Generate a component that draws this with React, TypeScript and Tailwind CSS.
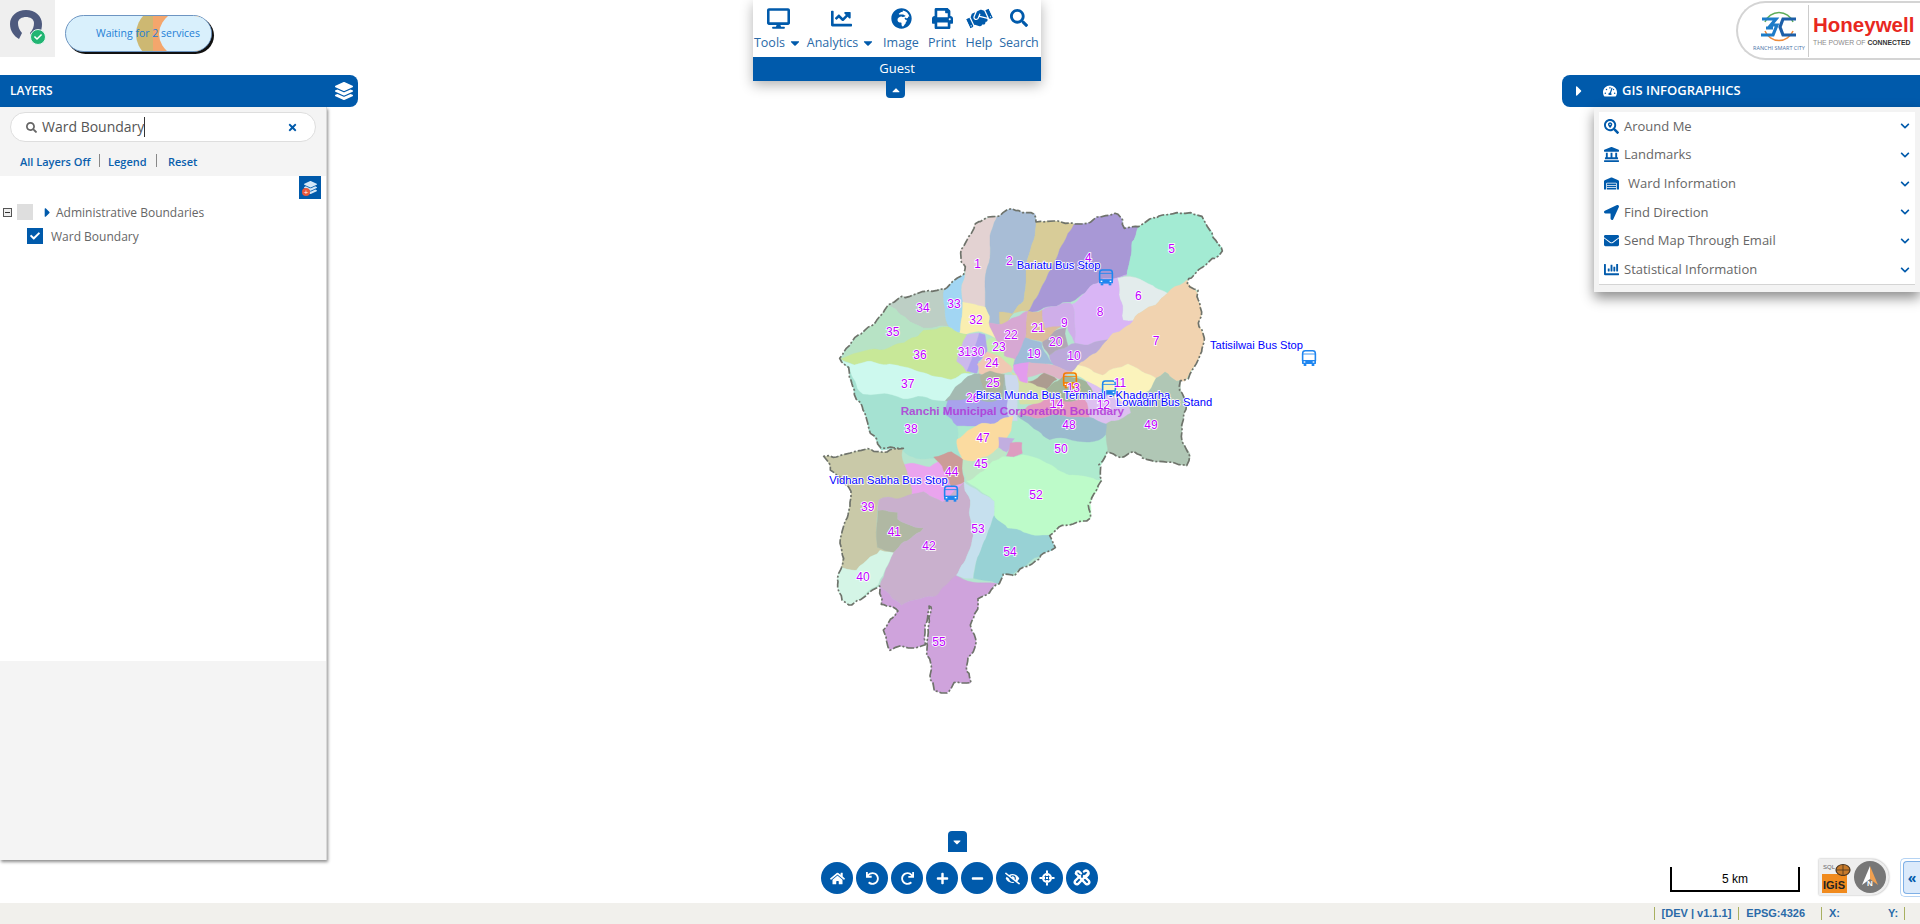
import { useMemo } from 'react'
import {
  FaCaretDown,
  FaCaretRight,
  FaCaretUp,
  FaChartBar,
  FaChartLine,
  FaCheck,
  FaChevronDown,
  FaDesktop,
  FaEnvelope,
  FaEyeSlash,
  FaGlobeAfrica,
  FaHandshake,
  FaHome,
  FaLandmark,
  FaLayerGroup,
  FaLocationArrow,
  FaMinus,
  FaPlus,
  FaPrint,
  FaRedo,
  FaSearch,
  FaSearchLocation,
  FaTachometerAlt,
  FaTimes,
  FaUndo,
  FaWarehouse,
} from 'react-icons/fa'

const font = { fontFamily: '"Open Sans", "Noto Sans", sans-serif' }

const MENU = [
  { label: 'Tools', icon: FaDesktop, w: 'w-[50px]', size: 'text-[23px]', caret: true },
  { label: 'Analytics', icon: FaChartLine, w: 'w-[76px]', size: 'text-[21px]', caret: true },
  { label: 'Image', icon: FaGlobeAfrica, w: 'w-[44px]', size: 'text-[21px]' },
  { label: 'Print', icon: FaPrint, w: 'w-[38px]', size: 'text-[21px]' },
  { label: 'Help', icon: FaHandshake, w: 'w-[36px]', size: 'text-[25px] -rotate-[25deg]' },
  { label: 'Search', icon: FaSearch, w: 'w-[44px]', size: 'text-[18px]' },
]

const GIS_ROWS = [
  { label: 'Around Me', icon: FaSearchLocation, indent: false },
  { label: 'Landmarks', icon: FaLandmark, indent: false },
  { label: 'Ward Information', icon: FaWarehouse, indent: true },
  { label: 'Find Direction', icon: FaLocationArrow, indent: false },
  { label: 'Send Map Through Email', icon: FaEnvelope, indent: false },
  { label: 'Statistical Information', icon: FaChartBar, indent: false },
]

function TargetIcon() {
  return (
    <svg width="16" height="16" viewBox="0 0 16 16">
      <circle cx="8" cy="8" r="5" fill="#fff" />
      <path d="M8 0.5V3M8 13V15.5M0.5 8H3M13 8H15.5" stroke="#fff" strokeWidth="2" />
      <path d="M6.5 5.5V10.5M9.5 5.5V10.5M5.5 6.5H10.5M5.5 9.5H10.5" stroke="#005aab" strokeWidth="1" />
    </svg>
  )
}

function KnotIcon() {
  return (
    <svg width="18" height="18" viewBox="0 0 18 18" fill="none" stroke="#fff" strokeWidth="2.4" strokeLinecap="round">
      <path d="M3 4.5L13 15A2.2 2.2 0 0 0 16 12L11 7" />
      <path d="M15 4.5L5 15A2.2 2.2 0 0 1 2 12L7 7" />
      <path d="M11 2.5A2.6 2.6 0 0 1 15 6L12 9" />
      <path d="M3 4.5A2 2 0 0 1 6 2.5L8 4.5" />
    </svg>
  )
}

const TOOLS = [
  <FaHome key="home" className="text-[15px]" />,
  <FaUndo key="undo" />,
  <FaRedo key="redo" />,
  <FaPlus key="plus" />,
  <FaMinus key="minus" />,
  <FaEyeSlash key="eye" className="text-[15px]" />,
  <TargetIcon key="target" />,
  <KnotIcon key="knot" />,
]

// ward shapes, in 3x units of the map canvas
const WARDS: { fill: string; pts: string }[] = [
  { fill: '#a5e2d2', pts: '100,510 170,690 210,775 275,780 300,800 445,810 445,745 500,710 420,620 160,600' },
  { fill: '#aeeace', pts: '440,700 610,680 650,695 720,745 840,755 885,740 890,790 870,830 870,870 770,850 720,825 640,795 590,800 480,875 460,800' },
  { fill: '#e3d2d2', pts: '555,75 490,105 455,180 460,255 458,340 525,350 530,230 548,130' },
  { fill: '#a8bdd6', pts: '555,75 600,58 640,68 680,70 680,95 650,240 640,330 600,395 540,400 525,350 530,230 548,130' },
  { fill: '#d8cc98', pts: '680,92 740,95 790,105 745,200 690,300 660,362 610,372 568,365 570,403 600,395 640,330 650,240' },
  { fill: '#a898d6', pts: '787,105 860,85 925,70 950,110 990,110 965,155 955,260 880,265 830,310 740,350 660,362 690,300 745,200' },
  { fill: '#a3ebd3', pts: '990,110 1050,75 1100,68 1170,80 1210,125 1235,180 1175,235 1130,265 1078,310 1000,270 955,260 965,155' },
  { fill: '#e3ecec', pts: '925,262 1000,270 1078,310 970,390 945,385 925,310' },
  { fill: '#f1d3b0', pts: '1130,270 1165,305 1170,400 1185,440 1170,500 1130,570 1100,575 1060,550 1037,565 960,525 880,550 800,530 890,450 970,390 1078,310' },
  { fill: '#d9b5f5', pts: '955,260 925,262 925,310 945,385 970,390 890,450 800,465 785,340 830,310 880,265' },
  { fill: '#cfaee9', pts: '785,335 800,465 770,410 700,415 700,360 740,350' },
  { fill: '#bba9d9', pts: '890,450 800,530 780,545 730,525 720,490 775,470 800,465' },
  { fill: '#b0a7b6', pts: '720,430 765,412 775,470 720,490 695,455' },
  { fill: '#dcbd9e', pts: '660,362 700,360 700,412 750,410 695,455 640,445' },
  { fill: '#d7a8d3', pts: '540,400 600,395 660,362 640,445 612,520 580,495 555,440' },
  { fill: '#a0bcd9', pts: '640,445 695,458 730,522 612,522 625,480' },
  { fill: '#c4ecb0', pts: '555,440 580,495 612,505 612,530 580,505 530,490 525,460' },
  { fill: '#a2d6f3', pts: '400,295 458,255 458,340 448,425 410,412' },
  { fill: '#bdcfc5', pts: '232,352 270,318 330,310 400,295 410,412 340,412' },
  { fill: '#f9eeb0', pts: '458,340 525,350 540,400 555,440 530,432 448,425' },
  { fill: '#b7e3c5', pts: '232,352 340,412 410,415 475,430 340,425 280,460 100,500 180,405' },
  { fill: '#c8e898', pts: '95,500 280,460 340,420 410,415 475,430 445,510 480,545 420,570 240,520 130,520' },
  { fill: '#ccb9ec', pts: '475,430 510,435 495,480 470,545 440,515' },
  { fill: '#afa3ed', pts: '510,435 530,440 525,490 500,510 500,545 470,540' },
  { fill: '#f0c9b3', pts: '525,490 580,505 612,530 610,545 540,560 510,548 497,520' },
  { fill: '#cdf9ee', pts: '95,505 130,520 240,520 420,570 490,545 410,630 160,610' },
  { fill: '#a4bab2', pts: '410,630 490,545 510,548 540,560 585,555 590,640 440,640' },
  { fill: '#adb49e', pts: '515,555 540,545 585,555 570,630 540,620 520,590' },
  { fill: '#a8a3ec', pts: '400,670 420,630 600,630 610,680 500,710 440,705' },
  { fill: '#d6e0a8', pts: '610,545 650,570 720,605 720,640 630,640' },
  { fill: '#e39cee', pts: '615,520 660,520 650,578 625,570' },
  { fill: '#deb5c7', pts: '660,520 730,525 780,545 755,562 700,555 652,558' },
  { fill: '#ac9c90', pts: '652,575 700,555 740,565 710,600 680,590' },
  { fill: '#a2b59a', pts: '710,600 760,555 840,580 850,625 720,635' },
  { fill: '#fbf3bc', pts: '780,545 800,530 880,550 960,525 1037,565 1020,600 960,650 880,595 835,575' },
  { fill: '#ddc0f0', pts: '835,575 880,595 960,650 965,670 890,705 840,680 820,630 850,625' },
  { fill: '#e39ac0', pts: '625,680 660,645 720,630 820,630 840,680' },
  { fill: '#ccd9ee', pts: '585,555 620,555 625,695 605,695 590,640' },
  { fill: '#b0c7b5', pts: '1037,565 1060,550 1100,575 1115,575 1125,660 1115,740 1137,805 1130,822 1020,815 975,782 935,805 890,790 885,705 965,670 960,650 1020,600' },
  { fill: '#9abbce', pts: '625,680 840,680 890,705 885,740 840,755 720,745 650,700' },
  { fill: '#fbdba0', pts: '445,745 500,710 610,680 600,720 560,775 530,810 450,812' },
  { fill: '#c1aee0', pts: '565,740 610,745 590,782 560,775' },
  { fill: '#dd9cc0', pts: '600,758 638,760 640,792 590,798' },
  { fill: '#bfe6c5', pts: '450,810 530,805 560,775 590,782 585,800 475,878 460,840' },
  { fill: '#eaa4ee', pts: '280,825 360,825 385,815 430,890 465,880 470,940 400,935 340,908 305,920' },
  { fill: '#cc9c98', pts: '375,800 425,790 452,810 465,880 430,890 385,820' },
  { fill: '#c9c9a8', pts: '45,805 130,785 275,778 305,920 205,930 198,1070 250,1090 205,1078 145,1142 90,1125 100,1010 130,900 60,840' },
  { fill: '#b0b8a3', pts: '205,965 265,965 265,990 335,1012 250,1090 198,1070' },
  { fill: '#c9b0cd', pts: '205,930 340,908 400,935 465,880 492,1040 442,1160 440,1210 370,1220 280,1240 205,1190 250,1090 335,1012 265,990 265,965 205,965' },
  { fill: '#d4f5e6', pts: '90,1125 145,1142 205,1078 250,1090 200,1185 110,1248 85,1210' },
  { fill: '#c6e0ee', pts: '465,880 555,935 555,970 515,1070 490,1162 442,1160 492,1040' },
  { fill: '#98d2d5', pts: '555,972 590,1015 640,1030 725,1035 735,1070 690,1095 640,1130 580,1155 565,1185 492,1162 515,1070' },
  { fill: '#bdfbc9', pts: '475,875 580,800 640,795 720,825 770,850 860,870 878,865 840,940 845,985 770,1005 725,1035 640,1030 590,1015 555,972 555,935' },
  { fill: '#cfa3dc', pts: '205,1190 280,1240 370,1220 442,1162 560,1185 500,1225 505,1260 485,1310 495,1375 475,1400 478,1475 430,1485 405,1510 375,1500 352,1390 360,1250 352,1250 345,1365 240,1380 215,1320 270,1260 215,1245' },
]

const OUTLINE: [number, number][] = [
  [490, 105], [530, 85], [555, 75], [600, 58], [640, 68], [680, 70], [680, 92], [740, 95], [790, 105], [860, 85], [925, 70], [950, 110], [990, 110], [1050, 75], [1100, 68], [1170, 80], [1210, 125], [1235, 180], [1175, 235], [1135, 265], [1135, 280], [1165, 300], [1170, 400], [1185, 440], [1170, 500], [1140, 560], [1112, 575], [1125, 660], [1115, 740], [1130, 790], [1137, 810], [1130, 822], [1020, 815], [975, 782], [935, 805], [890, 790], [870, 820], [878, 865], [855, 905], [835, 950], [845, 985], [770, 1005], [725, 1035], [735, 1070], [690, 1095], [685, 1110], [660, 1125], [640, 1130], [610, 1150], [580, 1155], [565, 1185], [500, 1225], [505, 1260], [485, 1310], [495, 1375], [475, 1400], [478, 1475], [430, 1485], [405, 1510], [375, 1500], [352, 1390], [360, 1250], [352, 1250], [345, 1365], [240, 1380], [215, 1320], [270, 1260], [215, 1245], [205, 1190], [110, 1248], [85, 1210], [100, 1010], [130, 900], [60, 840], [45, 805], [130, 785], [275, 778], [210, 770], [170, 690], [100, 510], [92, 500], [180, 405], [232, 352], [270, 318], [330, 310], [400, 295], [455, 255], [460, 235], [455, 180],
]

const WARD_LABELS: [string, number, number][] = [
  ['1', 503, 222], ['2', 598, 212], ['4', 835, 205], ['5', 1085, 178], ['6', 985, 317], ['7', 1038, 452], ['8', 870, 365], ['9', 763, 398], ['10', 792, 497], ['11', 930, 578], ['12', 880, 645], ['13', 790, 595], ['14', 740, 643], ['19', 672, 491], ['20', 737, 455], ['21', 684, 413], ['22', 603, 434], ['23', 567, 470], ['24', 546, 518], ['25', 549, 578], ['26', 488, 625], ['31', 463, 485], ['30', 503, 485], ['32', 498, 389], ['33', 432, 341], ['34', 339, 353], ['35', 248, 425], ['36', 330, 496], ['37', 293, 583], ['38', 303, 716], ['47', 519, 743], ['48', 777, 704], ['49', 1023, 704], ['50', 753, 778], ['44', 425, 845], ['45', 513, 823], ['52', 678, 914], ['39', 173, 950], ['41', 253, 1027], ['42', 357, 1067], ['53', 504, 1016], ['54', 600, 1085], ['40', 159, 1160], ['55', 387, 1357],
]

const STOP_LABELS: [string, number, number][] = [
  ['Bariatu Bus Stop', 620, 226],
  ['Tatisilwai Bus Stop', 1200, 465],
  ['Birsa Munda Bus Terminal - Khadgarha', 497, 615],
  ['Lowadin Bus Stand', 918, 637],
  ['Vidhan Sabha Bus Stop', 58, 870],
]

// same offset for the same spot, so neighbouring wards keep a shared edge
function warp(x: number, y: number): [number, number] {
  const a = Math.sin(y * 0.045 + x * 0.02) * 4 + Math.sin(x * 0.13 + y * 0.07) * 2.5
  const b = Math.sin(x * 0.05 - y * 0.02) * 4 + Math.sin(y * 0.12 - x * 0.08) * 2.5
  return [x + a, y + b]
}

function trace(points: [number, number][], jitter = 0) {
  let out = ''
  points.forEach(([x, y], i) => {
    const [nx, ny] = points[(i + 1) % points.length]
    const steps = Math.max(1, Math.round(Math.hypot(nx - x, ny - y) / 12))
    for (let s = 0; s < steps; s++) {
      const t = s / steps
      const [px, py] = warp(x + (nx - x) * t, y + (ny - y) * t)
      const j = Math.sin(i * 7.3 + s * 2.1) * jitter
      out += `${Math.round(px + j)},${Math.round(py - j)} `
    }
  })
  return out
}

function parsePts(pts: string) {
  return pts.split(' ').map((p) => p.split(',').map(Number) as [number, number])
}

function Bus({ x, y, color }: { x: number; y: number; color: string }) {
  return (
    <g transform={`translate(${x - 21} ${y - 24})`}>
      <rect x="2" y="2" width="38" height="38" rx="8" fill="none" stroke={color} strokeWidth="4.5" />
      <rect x="1" y="12" width="40" height="20" fill="none" stroke={color} strokeWidth="2.5" />
      <rect x="0" y="30" width="42" height="12" rx="2" fill={color} />
      <rect x="5" y="42" width="8" height="6" fill={color} />
      <rect x="29" y="42" width="8" height="6" fill={color} />
      <rect x="5" y="34" width="5" height="4" fill="#fff" />
      <rect x="32" y="34" width="5" height="4" fill="#fff" />
    </g>
  )
}

function WardMap() {
  const wards = useMemo(() => WARDS.map((w) => ({ fill: w.fill, pts: trace(parsePts(w.pts)) })), [])
  const outline = useMemo(() => trace(OUTLINE, 1.5), [])
  return (
    <svg className="absolute left-[810px] top-[190px] w-[530px] h-[520px]" viewBox="0 0 1590 1560">
      <polygon points={outline} fill="#b5e5d0" />
      {wards.map((w, i) => (
        <polygon key={i} points={w.pts} fill={w.fill} stroke={w.fill} strokeWidth="1" strokeLinejoin="round" />
      ))}
      <polygon points={outline} fill="none" stroke="#6f736b" strokeWidth="5" strokeDasharray="24 6 6 6" strokeLinejoin="round" />
      <Bus x={888} y={262} color="#1f86f0" />
      <Bus x={780} y={571} color="#f57c00" />
      <Bus x={897} y={595} color="#1f86f0" />
      <Bus x={423} y={911} color="#1f86f0" />
      <Bus x={1497} y={504} color="#1f86f0" />
      <g fontFamily='"Liberation Sans", sans-serif'>
        {WARD_LABELS.map(([t, x, y]) => (
          <text key={t} x={x} y={y} fontSize="36" textAnchor="middle" dominantBaseline="central" fill="#c000ff" stroke="#fff" strokeWidth="5" className="[paint-order:stroke]">
            {t}
          </text>
        ))}
        {STOP_LABELS.map(([t, x, y]) => (
          <text key={t} x={x} y={y} fontSize="33.5" dominantBaseline="central" fill="#0000ff" stroke="#fff" strokeWidth="5" className="[paint-order:stroke]">
            {t}
          </text>
        ))}
        <text x="272" y="660" fontSize="35" dominantBaseline="central" fontWeight="700" fill="#b030d8" opacity="0.8">
          Ranchi Municipal Corporation Boundary
        </text>
      </g>
    </svg>
  )
}

function StatusPill() {
  return (
    <div className="relative ml-[10px] mt-[15px] w-[147px] h-[37px] rounded-full overflow-hidden bg-[#d9f0fc] border border-[#6d95c2] shadow-[2px_2px_0_#111] flex items-center justify-end pr-[11px]">
      <div className="absolute left-[70px] top-[-12px] w-[70px] h-[60px] rounded-[50%] bg-[#cdb872] overflow-hidden">
        <div className="absolute left-[17px] top-0 w-[60px] h-[60px] bg-[#f4a66c]" />
      </div>
      <div className="absolute left-[93px] top-[-12px] w-[90px] h-[60px] rounded-[50%] bg-[#d9f0fc]" />
      <span className="relative text-[10.5px] text-[#1e7fd6]">Waiting for 2 services</span>
    </div>
  )
}

function LayersPanel() {
  return (
    <div className="absolute left-0 top-[75px] w-[358px]">
      <div className="h-[32px] bg-[#005aab] rounded-r-[8px] flex items-center justify-between pl-[10px] pr-[5px] text-white">
        <span className="text-[12px] font-semibold">LAYERS</span>
        <FaLayerGroup className="text-[18px]" />
      </div>
      <div className="w-[327px] h-[753px] bg-[#f4f4f4] border-r border-[#d8d8d8] shadow-[1px_2px_3px_rgba(0,0,0,0.45)] flex flex-col">
        <div className="h-[69px] pt-[5px] shrink-0">
          <div className="ml-[10px] w-[306px] h-[30px] rounded-full bg-white border border-[#dedede] flex items-center pl-[15px] pr-[17px]">
            <FaSearch className="text-[11px] text-[#666] mr-[5px]" />
            <span className="text-[14px] text-[#555] border-r border-[#333] leading-[20px]">Ward Boundary</span>
            <FaTimes className="ml-auto text-[11px] text-[#005aab]" />
          </div>
          <div className="flex items-center mt-[12px] pl-[20px] text-[11px] font-semibold text-[#0a5fad]">
            <span className="w-[70px] whitespace-nowrap">All Layers Off</span>
            <span className="ml-[9px] mr-[8px] w-[1px] h-[13px] -mt-[3px] bg-[#888]" />
            <span className="w-[38px]">Legend</span>
            <span className="ml-[10px] mr-[11px] w-[1px] h-[13px] -mt-[3px] bg-[#888]" />
            <span>Reset</span>
          </div>
        </div>
        <div className="h-[485px] bg-white shrink-0 text-[#666]">
          <div className="flex justify-end pr-[5px]">
            <div className="relative w-[22px] h-[23px] bg-[#005aab] flex items-center justify-center">
              <FaLayerGroup className="text-[13px] text-[#d5e8f8]" />
              <span className="absolute left-[3px] bottom-[3px] w-[8px] h-[8px] rounded-full bg-[#e8583c] text-white text-[8px] leading-[8px] text-center">+</span>
            </div>
          </div>
          <div className="flex items-center h-[16px] mt-[5px] pl-[3px]">
            <span className="w-[9px] h-[9px] border border-[#555] bg-[#eee] flex items-center justify-center">
              <span className="w-[5px] h-[1px] bg-[#333]" />
            </span>
            <span className="ml-[5px] w-[16px] h-[16px] bg-[#dedede]" />
            <FaCaretRight className="ml-[7px] text-[#005aab] text-[15px]" />
            <span className="ml-[1px] text-[12px] relative top-[1px]">Administrative Boundaries</span>
          </div>
          <div className="flex items-center h-[16px] mt-[8px] pl-[27px]">
            <span className="w-[16px] h-[16px] bg-[#005aab] flex items-center justify-center">
              <FaCheck className="text-[10px] text-white" />
            </span>
            <span className="ml-[8px] text-[12px] relative top-[1px]">Ward Boundary</span>
          </div>
        </div>
      </div>
    </div>
  )
}

function TopMenu() {
  return (
    <div className="absolute left-[753px] top-0 w-[288px] flex flex-col items-center">
      <div className="w-full shadow-[0_4px_12px_rgba(0,0,0,0.3)]">
        <div className="h-[57px] bg-white flex text-[#2a6aa8]">
          {MENU.map((m) => {
            const Icon = m.icon
            return (
              <div key={m.label} className={`${m.w} flex flex-col items-center`}>
                <div className="h-[36px] flex items-center justify-center text-[#005aab]">
                  <Icon className={m.size} />
                </div>
                <div className="flex items-center text-[12.5px] leading-[14px] whitespace-nowrap">
                  {m.label}
                  {m.caret && <FaCaretDown className="ml-[3px] text-[14px] text-[#005aab]" />}
                </div>
              </div>
            )
          })}
        </div>
        <div className="h-[24px] bg-[#005aab] text-white text-[13px] flex items-center justify-center">Guest</div>
      </div>
      <div className="w-[19px] h-[17px] mr-[3px] bg-[#005aab] rounded-b-[4px] flex items-center justify-center text-white text-[12px]">
        <FaCaretUp />
      </div>
    </div>
  )
}

function BrandLogo() {
  return (
    <div className="absolute right-0 top-[1px] w-[184px] h-[59px] bg-white rounded-l-full border-2 border-r-0 border-[#d4d4d4] flex items-center">
      <div className="w-[69px] pl-[13px] flex flex-col items-center">
        <svg width="38" height="33" viewBox="0 0 38 33">
          <path d="M5 12A15 15 0 0 1 33 12" fill="none" stroke="#5fae5b" strokeWidth="1.5" />
          <path d="M5 21A15 15 0 0 0 33 21" fill="none" stroke="#ee8a3a" strokeWidth="1.5" />
          <path d="M2 9H16L11 15H17L13 25H1M6 18H13" fill="none" stroke="#1d7cc8" strokeWidth="3.2" />
          <path d="M36 9H23L20 17L23 25H36" fill="none" stroke="#1d5fa8" strokeWidth="3.2" />
        </svg>
        <span className="text-[5.5px] leading-[8px] mt-[1px] text-[#4a72a8] whitespace-nowrap">RANCHI SMART CITY</span>
      </div>
      <div className="w-[1px] h-[52px] bg-[#ccc] ml-[1px]" />
      <div className="flex flex-col pl-[4px] w-[107px] overflow-hidden" style={{ fontFamily: '"Liberation Sans", sans-serif' }}>
        <span className="text-[20.5px] leading-[25px] font-bold text-[#e8281f]">Honeywell</span>
        <span className="text-[6.8px] leading-[12px] text-[#8a8a8a] whitespace-nowrap">
          THE POWER OF <b className="text-[#333]">CONNECTED</b>
        </span>
      </div>
    </div>
  )
}

function GisPanel() {
  return (
    <div className="absolute right-0 top-[75px] w-[358px]">
      <div className="h-[32px] bg-[#005aab] rounded-l-[8px] flex items-center text-white">
        <FaCaretRight className="ml-[9px] text-[16px]" />
        <FaTachometerAlt className="ml-[16px] text-[14px]" />
        <span className="ml-[5px] text-[13px] font-semibold">GIS INFOGRAPHICS</span>
      </div>
      <div className="ml-[32px] h-[185px] bg-[#f3f3f3] px-[5px] pt-[5px] pb-[7px] shadow-[0_6px_12px_rgba(0,0,0,0.45)]">
        <div className="h-[173px] bg-white border-b border-[#d4d4d4] flex flex-col justify-around">
          {GIS_ROWS.map((r) => {
            const Icon = r.icon
            return (
              <div key={r.label} className="flex items-center pl-[4px] pr-[5px] h-[28px] text-[13px] text-[#666]">
                <span className="w-[16px] flex justify-center text-[#005aab] text-[15px]">
                  <Icon />
                </span>
                <span className={r.indent ? 'ml-[9px]' : 'ml-[5px]'}>{r.label}</span>
                <FaChevronDown className="ml-auto text-[10px] text-[#005aab]" />
              </div>
            )
          })}
        </div>
      </div>
    </div>
  )
}

function BottomTools() {
  return (
    <div className="absolute left-[821px] top-[831px] flex flex-col items-center">
      <div className="w-[19px] h-[21px] mr-[5px] bg-[#005aab] rounded-t-[4px] flex items-center justify-center text-white text-[12px]">
        <FaCaretDown />
      </div>
      <div className="flex gap-[3px] mt-[10px]">
        {TOOLS.map((icon, i) => (
          <div key={i} className="w-[32px] h-[32px] rounded-full bg-[#005aab] text-white text-[13px] flex items-center justify-center">
            {icon}
          </div>
        ))}
      </div>
    </div>
  )
}

function MapWidgets() {
  return (
    <div className="absolute right-0 bottom-[6px] flex items-end">
      <div className="w-[130px] h-[25px] mb-[5px] border-x-2 border-b-2 border-black flex items-center justify-center text-[12px] text-black" style={{ fontFamily: '"Liberation Sans", sans-serif' }}>
        5 km
      </div>
      <div className="ml-[19px] w-[70px] h-[36px] mb-[2px] bg-[#eee] rounded-r-full flex items-center pl-[3px] shadow-[0_0_2px_rgba(0,0,0,0.4)]">
        <div className="relative w-[25px] h-[31px] flex flex-col justify-end" style={{ fontFamily: '"Liberation Sans", sans-serif' }}>
          <span className="absolute top-[1px] left-[1px] text-[6px] text-[#666]">SQL</span>
          <svg className="absolute top-0 right-[-5px]" width="18" height="14" viewBox="0 0 18 14">
            <ellipse cx="9" cy="8" rx="7" ry="5.5" fill="#c77a2a" stroke="#4a3520" strokeWidth="1.2" />
            <path d="M2 8H16M9 3V13" stroke="#4a3520" strokeWidth="0.8" />
          </svg>
          <span className="h-[19px] bg-[#f08a1d] text-[11px] leading-[22px] font-bold text-[#222] pl-[1px]">IGiS</span>
        </div>
        <div className="relative ml-[7px] w-[32px] h-[32px] rounded-full bg-[#777] flex items-center justify-center">
          <svg width="20" height="24" viewBox="0 0 20 24">
            <path d="M10 1L18 20L10 14Z" fill="#f0a050" />
            <path d="M10 1L2 20L10 14Z" fill="#fff" />
          </svg>
          <span className="absolute bottom-[3px] text-[8px] font-bold text-white" style={{ fontFamily: '"Liberation Sans", sans-serif' }}>N</span>
        </div>
      </div>
      <div className="ml-[11px] w-[20px] h-[39px] bg-white border border-r-0 border-[#b5d3f3] rounded-l-[5px] pl-[2px] py-[2px]">
        <div className="h-full bg-[#dbeafb] border border-r-0 border-[#7fb0e6] rounded-l-[4px] flex items-center justify-center text-[#005aab] text-[14px] leading-none font-bold">
          «
        </div>
      </div>
    </div>
  )
}

function Footer() {
  return (
    <div className="h-[21px] shrink-0 bg-[#f1f0ec] flex items-center justify-end text-[11px] font-bold text-[#2a6aa8]" style={{ fontFamily: '"Liberation Sans", sans-serif' }}>
      <span className="w-[1px] h-[13px] bg-[#a8b060]" />
      <span className="ml-[7px]">[DEV | v1.1.1]</span>
      <span className="ml-[7px] w-[1px] h-[13px] bg-[#a8b060]" />
      <span className="ml-[7px]">EPSG:4326</span>
      <span className="ml-[16px] w-[1px] h-[13px] bg-[#a8b060]" />
      <span className="ml-[7px] w-[59px]">X:</span>
      <span className="w-[16px]">Y:</span>
      <span className="w-[1px] h-[13px] bg-[#a8b060] mr-[15px]" />
    </div>
  )
}

export default function App() {
  return (
    <div className="w-[1920px] h-[924px] flex flex-col bg-white overflow-hidden" style={font}>
      <div className="relative flex-1">
        <WardMap />
        <div className="absolute left-0 top-0 flex">
          <div className="relative w-[55px] h-[57px] bg-[#efefef]">
            <svg className="absolute left-[9px] top-[9px]" width="34" height="30" viewBox="0 0 34 30">
              <path d="M17 1C8 1 1 7 1 15C1 22 5 27 10 30L13 24C10 21 9 17 9 14C9 10 13 8 17 8C21 8 25 10 25 14C25 17 24 21 21 24L24 30C30 27 33 22 33 15C33 7 26 1 17 1Z" fill="#4e5a7e" />
            </svg>
            <div className="absolute left-[30px] top-[29px] w-[16px] h-[16px] rounded-full bg-[#22b573] border border-[#e6f5ee] flex items-center justify-center">
              <FaCheck className="text-[8px] text-white" />
            </div>
          </div>
          <StatusPill />
        </div>
        <LayersPanel />
        <TopMenu />
        <BrandLogo />
        <GisPanel />
        <BottomTools />
        <MapWidgets />
      </div>
      <Footer />
    </div>
  )
}
